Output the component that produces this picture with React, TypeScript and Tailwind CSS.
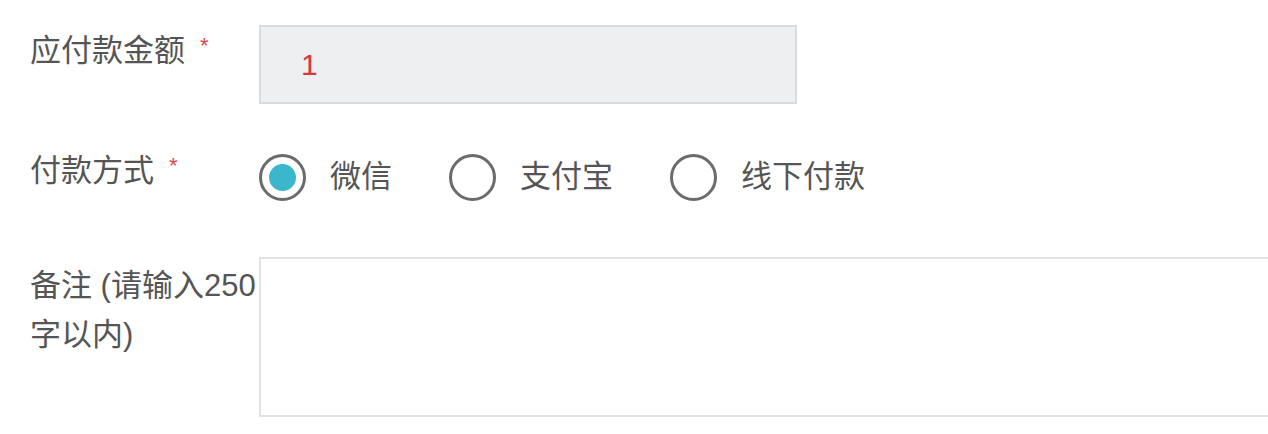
import { useState } from "react";

const methods = ["微信", "支付宝", "线下付款"];

function Radio({ checked, label, onClick }: { checked: boolean; label: string; onClick: () => void }) {
  return (
    <button type="button" onClick={onClick} className="flex items-center gap-[24px] mr-[57px]">
      <span className="w-[47px] h-[47px] rounded-full border-[3px] border-[#6b6b6b] flex items-center justify-center bg-white">
        {checked && <span className="w-[27px] h-[27px] rounded-full bg-[#3cb6cd]" />}
      </span>
      <span className="text-[31px] text-[#555]">{label}</span>
    </button>
  );
}

export default function App() {
  const [method, setMethod] = useState(0);

  return (
    <div
      className="w-[1268px] h-[434px] bg-white overflow-hidden pl-[30px] pt-[25px]"
      style={{ fontFamily: '"Liberation Sans", "Noto Sans CJK SC", sans-serif' }}
    >
      <div className="flex items-start">
        <div className="w-[229px] shrink-0 pt-[6px] text-[31px] leading-[40px] text-[#555] flex">
          应付款金额
          <span className="text-[#e0474c] text-[22px] leading-[30px] ml-[15px]">*</span>
        </div>
        <div className="w-[538px] h-[79px] bg-[#eeeff0] border-2 border-[#dadbdc] flex items-center pl-[40px]">
          <span className="text-[30px] text-[#d9363e]">1</span>
        </div>
      </div>

      <div className="flex items-center mt-[50px]">
        <div className="w-[229px] shrink-0 -mt-[14px] text-[31px] leading-[40px] text-[#555] flex">
          付款方式
          <span className="text-[#e0474c] text-[22px] leading-[30px] ml-[15px]">*</span>
        </div>
        <div className="flex items-center">
          {methods.map((m, i) => (
            <Radio key={m} label={m} checked={method === i} onClick={() => setMethod(i)} />
          ))}
        </div>
      </div>

      <div className="flex items-start mt-[56px]">
        <div className="w-[229px] shrink-0 pt-[4px] text-[31px] leading-[49px] text-[#555]">
          备注 (请输入250字以内)
        </div>
        <textarea className="w-[1040px] h-[160px] shrink-0 border-2 border-[#e2e2e2] bg-white resize-none outline-none" />
      </div>
    </div>
  );
}
